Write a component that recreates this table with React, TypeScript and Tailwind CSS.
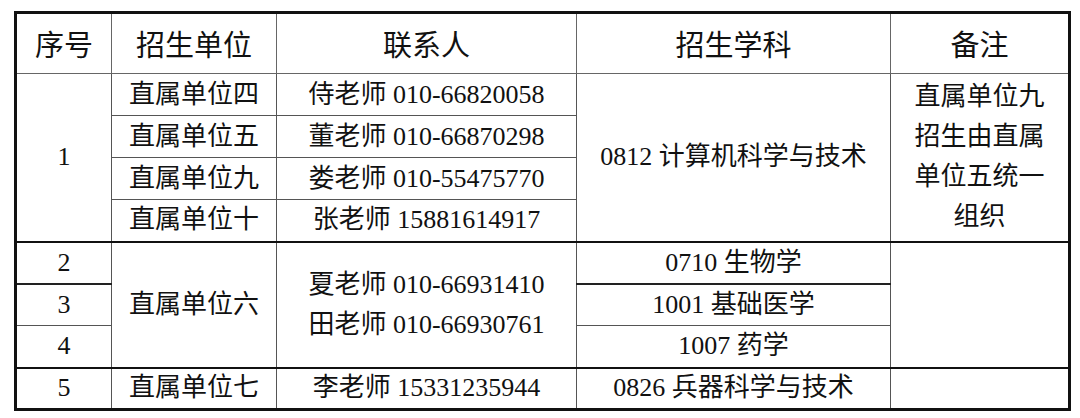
import React from 'react';

const head = "border border-[#666] font-['Noto_Sans_CJK_SC',sans-serif] text-[29px] text-[#111] font-normal text-center align-middle";
const cell = "border border-[#555] text-center align-middle";

export default function App() {
    return (
        <div className="w-[1080px] h-[418px] bg-white pt-[11px] pl-[14px] font-['Liberation_Serif','Noto_Sans_CJK_SC',serif] text-[26px] leading-none text-[#111]">
            <table className="table-fixed border-collapse border-[3px] border-[#111] w-[1054px]">
                <colgroup>
                    <col className="w-[96px]" />
                    <col className="w-[165px]" />
                    <col className="w-[300px]" />
                    <col className="w-[314px]" />
                    <col className="w-[179px]" />
                </colgroup>
                <thead>
                    <tr className="h-[61px]">
                        <th className={head}>序号</th>
                        <th className={head}>招生单位</th>
                        <th className={head}>联系人</th>
                        <th className={head}>招生学科</th>
                        <th className={head}>备注</th>
                    </tr>
                </thead>
                <tbody>
                    <tr className="h-[42px]">
                        <td rowSpan={4} className={cell}>1</td>
                        <td className={cell}>直属单位四</td>
                        <td className={cell}>侍老师 010-66820058</td>
                        <td rowSpan={4} className={cell}>0812 计算机科学与技术</td>
                        <td rowSpan={4} className={`${cell} px-[4px] leading-[40px]`}>
                            直属单位九<br />招生由直属<br />单位五统一<br />组织
                        </td>
                    </tr>
                    <tr className="h-[42px]">
                        <td className={cell}>直属单位五</td>
                        <td className={cell}>董老师 010-66870298</td>
                    </tr>
                    <tr className="h-[42px]">
                        <td className={cell}>直属单位九</td>
                        <td className={cell}>娄老师 010-55475770</td>
                    </tr>
                    <tr className="h-[42px]">
                        <td className={cell}>直属单位十</td>
                        <td className={cell}>张老师 15881614917</td>
                    </tr>
                    <tr className="h-[42px] border-t-2 border-[#111]">
                        <td className={`${cell} border-b-2 border-b-[#222]`}>2</td>
                        <td rowSpan={3} className={cell}>直属单位六</td>
                        <td rowSpan={3} className={`${cell} leading-[40px]`}>
                            <div>夏老师 010-66931410</div>
                            <div>田老师 010-66930761</div>
                        </td>
                        <td className={`${cell} border-b-2 border-b-[#222]`}>0710 生物学</td>
                        <td rowSpan={3} className={cell}></td>
                    </tr>
                    <tr className="h-[42px]">
                        <td className={cell}>3</td>
                        <td className={cell}>1001 基础医学</td>
                    </tr>
                    <tr className="h-[42px]">
                        <td className={cell}>4</td>
                        <td className={cell}>1007 药学</td>
                    </tr>
                    <tr className="h-[42px] border-t-2 border-[#111]">
                        <td className={cell}>5</td>
                        <td className={cell}>直属单位七</td>
                        <td className={cell}>李老师 15331235944</td>
                        <td className={cell}>0826 兵器科学与技术</td>
                        <td className={cell}></td>
                    </tr>
                </tbody>
            </table>
        </div>
    );
}
